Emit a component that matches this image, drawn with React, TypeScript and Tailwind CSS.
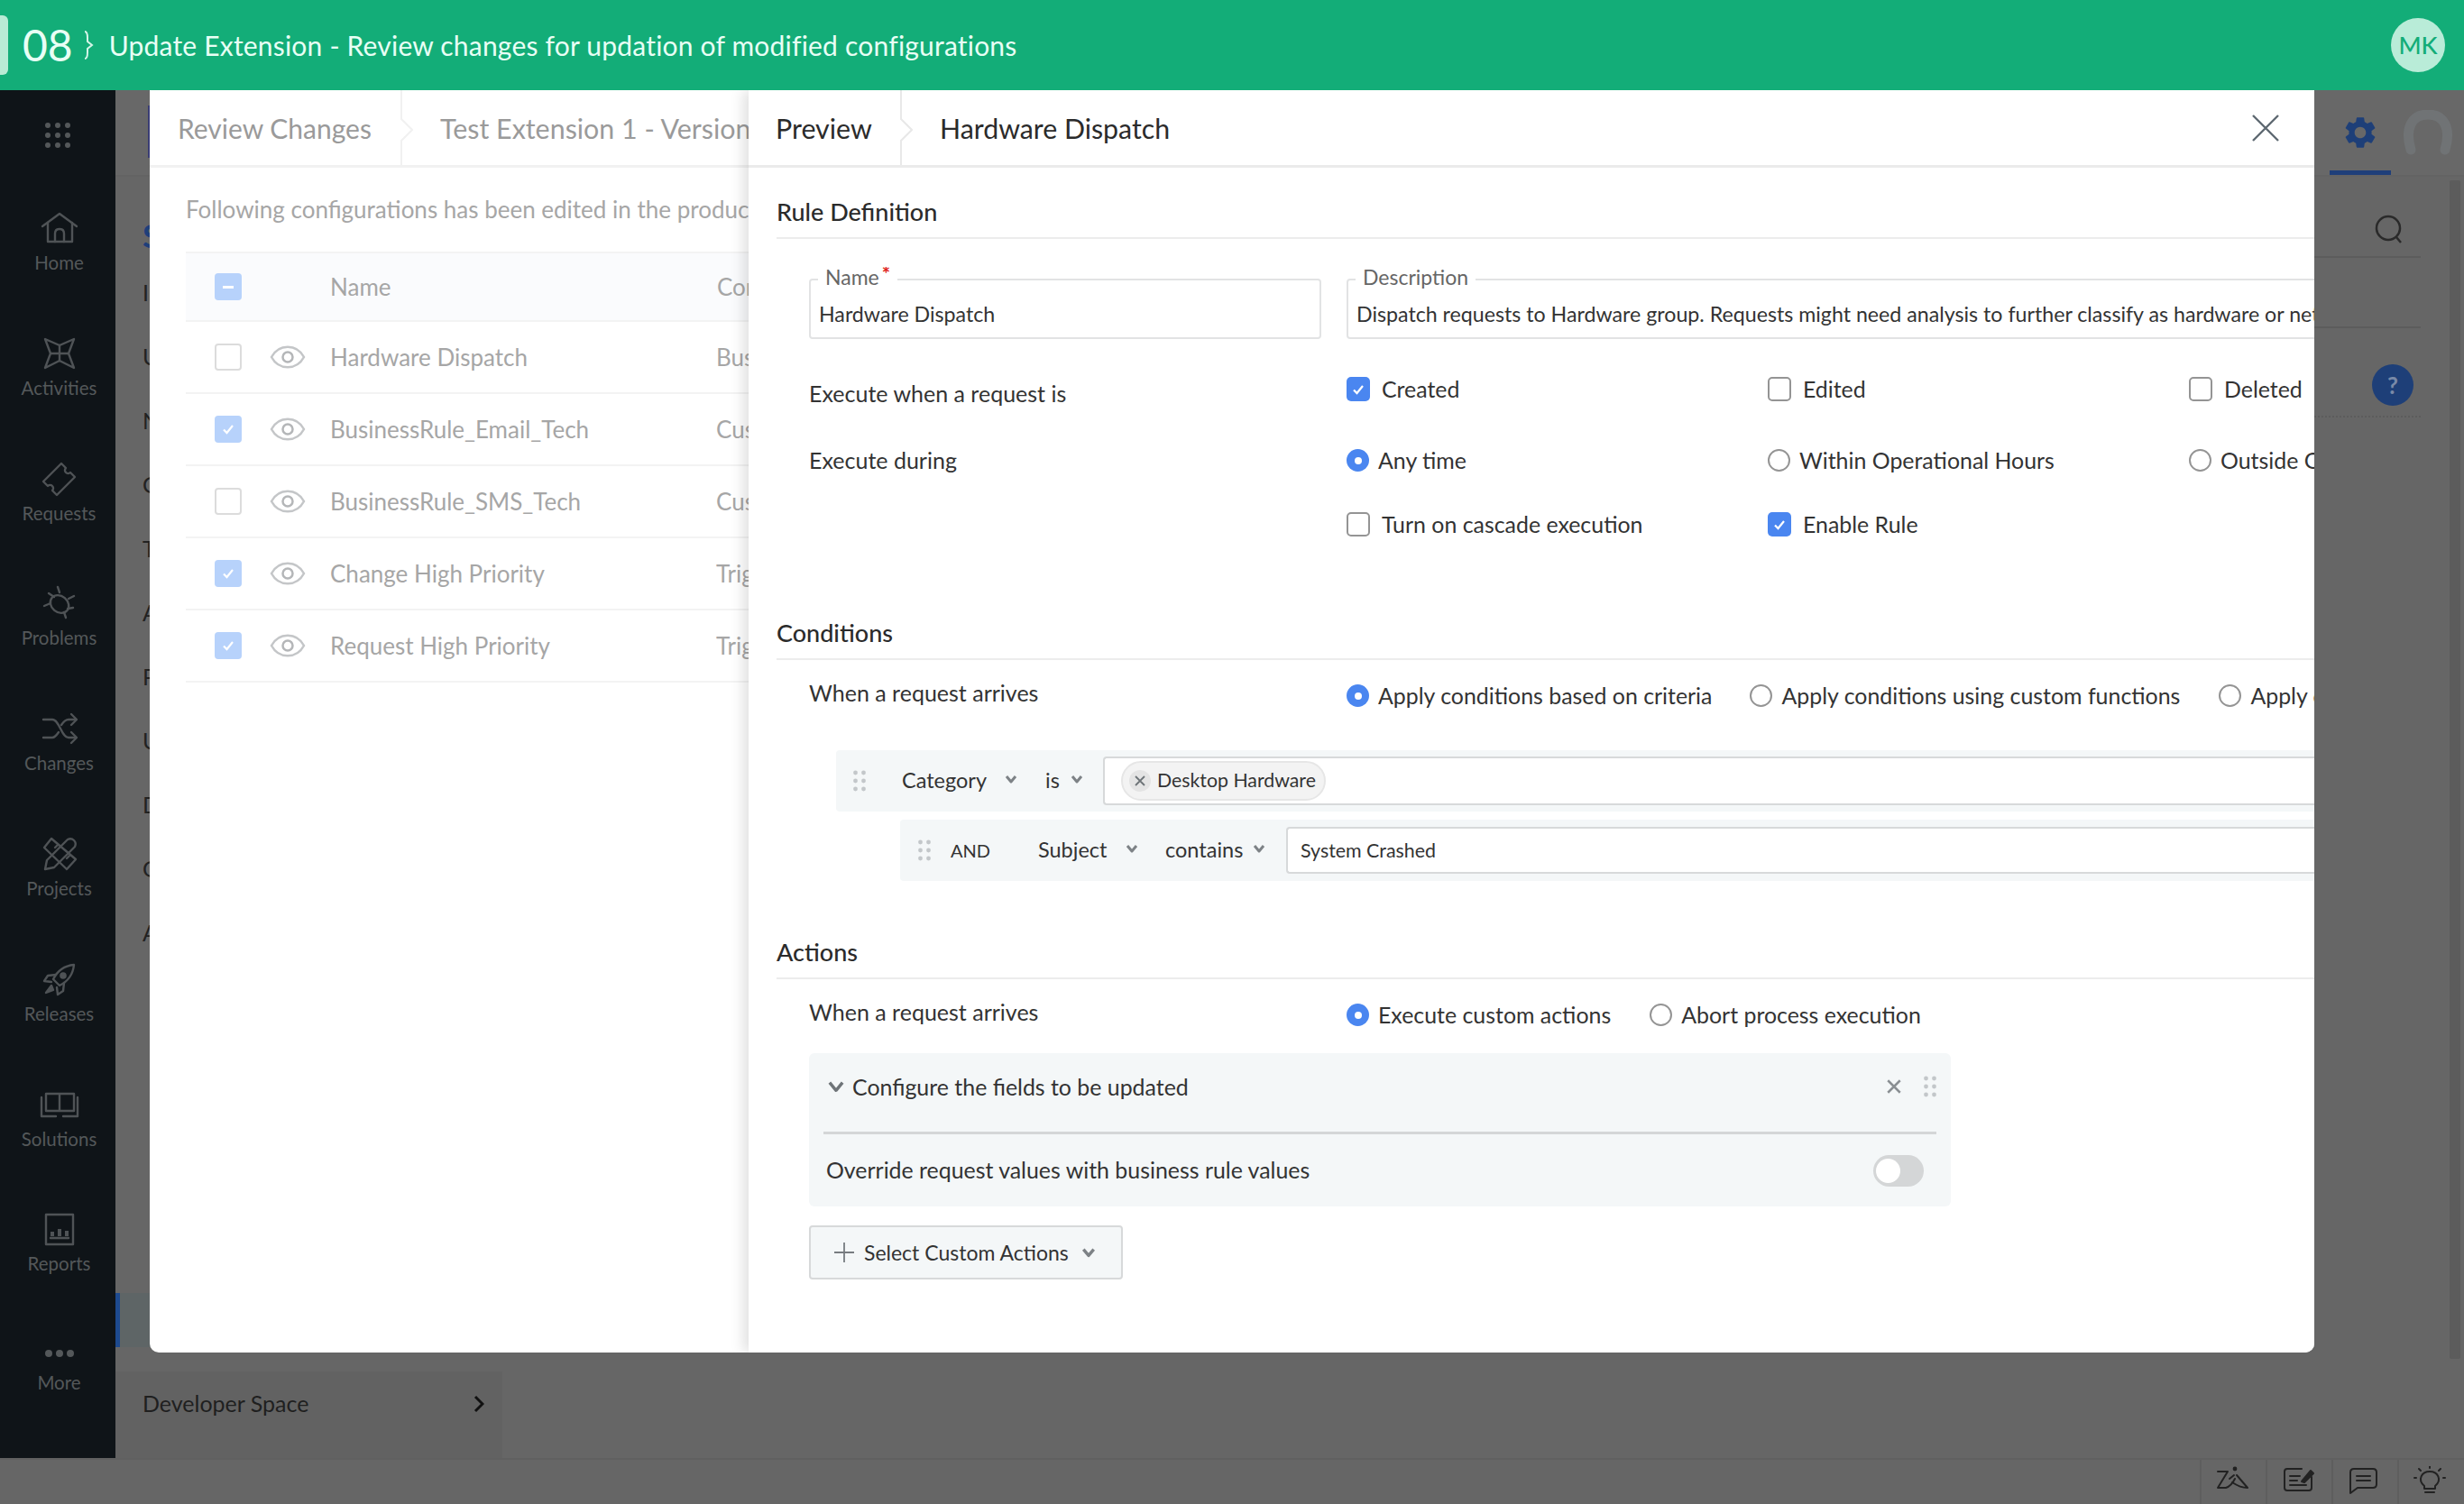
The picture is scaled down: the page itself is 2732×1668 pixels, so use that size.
import React from "react";
import { MdSettings } from "react-icons/md";

const s = { fill: "none", stroke: "#4f5356", strokeWidth: 2.4, strokeLinecap: "round" as const, strokeLinejoin: "round" as const };

const navIcons: Record<string, React.ReactNode> = {
  Home: <g {...s}><path d="M5 22 L24 8 L43 22" /><path d="M11 18 V39 H38 V18" /><path d="M19 39 V30 Q19 25 24 25 Q29 25 29 30 V39" /></g>,
  Activities: <g {...s}><path d="M8 8 L24 15 L40 8 L34 24 L40 40 L24 32 L8 40 L14 24 Z" /><path d="M24 15 V32 M14 24 H34" /></g>,
  Requests: <g {...s}><path d="M6 27 L26 7 L31 12 A3.5 3.5 0 0 0 36 17 L41 22 L21 42 L16 37 A3.5 3.5 0 0 0 11 32 Z" /></g>,
  Problems: <g {...s}><ellipse cx="24" cy="25" rx="11" ry="9" transform="rotate(40 24 25)" /><path d="M22 6 L24 12 M40 16 L34 19 M39 29 L33 30 M31 40 L29 34 M7 27 L14 24 M12 13 L18 17" /></g>,
  Changes: <g {...s}><path d="M6 14 H16 C24 14 26 34 34 34 H42 M6 34 H16 C19 34 21 31 23 28 M26 20 C28 17 30 14 34 14 H42" /><path d="M37 8 L43 14 L37 20 M37 28 L43 34 L37 40" /></g>,
  Projects: <g {...s}><path d="M15 7 L42 30 L32 41 L7 17 Z" /><path d="M8 41 L10 31 L33 8 Q37 6 40 9 Q43 12 41 16 L18 39 Z" /><path d="M19 17 L22 14 M32 29 L35 26" /></g>,
  Releases: <g {...s}><path d="M40 8 C30 9 22 14 17 24 L24 31 C34 26 39 18 40 8 Z" /><circle cx="28" cy="20" r="2.6" fill="#4f5356" /><path d="M20 19 L11 20 L7 26 L15 27 M29 28 L28 37 L22 41 L21 33" /><path d="M9 39 L15 31 L17 36 Z" fill="#4f5356" /></g>,
  Solutions: <g {...s}><path d="M9 12 H24 V31 H9 Z M24 12 H40 V31 H24 Z" /><path d="M4 16 V37 H20 M44 16 V37 H28" /></g>,
  Reports: <g {...s}><rect x="9" y="8" width="30" height="33" /><path d="M16 32 V27 M24 32 V24 M32 32 V26" strokeWidth="4" strokeLinecap="butt" /><path d="M14 34 H34" /></g>,
  More: <g fill="#54585a"><circle cx="12" cy="23" r="4" /><circle cx="24" cy="23" r="4" /><circle cx="36" cy="23" r="4" /></g>,
};

const navItems = ["Home", "Activities", "Requests", "Problems", "Changes", "Projects", "Releases", "Solutions", "Reports"];

function NavItem({ name, tight }: { name: string; tight?: boolean }) {
  return (
    <div className="flex h-[138.8px] shrink-0 flex-col items-center pt-[24px]">
      <svg width="48" height="48" viewBox="0 0 48 48" className="shrink-0">{navIcons[name]}</svg>
      <div className={`whitespace-nowrap text-[20.5px] leading-[22px] text-[#54585a] ${tight ? "mt-[-4px]" : "mt-[3px]"}`}>{name}</div>
    </div>
  );
}

function Chevron({ size = 14, color = "#7d8286", sw = 3 }: { size?: number; color?: string; sw?: number }) {
  return (
    <svg width={size} height={size} viewBox="0 0 14 14" className="shrink-0">
      <path d="M2 4 L7 10 L12 4" fill="none" stroke={color} strokeWidth={sw} strokeLinejoin="round" />
    </svg>
  );
}

function Check({ on, label }: { on?: boolean; label: string }) {
  return (
    <div className="flex items-center">
      {on ? (
        <div className="flex h-[27px] w-[26px] shrink-0 items-center justify-center rounded-[5px] bg-[#4a86f0]">
          <svg width="16" height="16" viewBox="0 0 16 16"><path d="M3 8.5 L6.5 12 L13 4" fill="none" stroke="#fff" strokeWidth="2.2" /></svg>
        </div>
      ) : (
        <div className="h-[27px] w-[26px] shrink-0 rounded-[5px] border-2 border-[#949494] bg-white" />
      )}
      <span className="ml-[13px] whitespace-nowrap text-[24.9px] text-[#333]">{label}</span>
    </div>
  );
}

function Radio({ on, label }: { on?: boolean; label: string }) {
  return (
    <div className="flex items-center">
      {on ? (
        <div className="flex h-[25px] w-[25px] shrink-0 items-center justify-center rounded-full bg-[#4a86f0]">
          <div className="h-[8px] w-[8px] rounded-full bg-white" />
        </div>
      ) : (
        <div className="h-[25px] w-[25px] shrink-0 rounded-full border-2 border-[#949494] bg-white" />
      )}
      <span className="ml-[10px] whitespace-nowrap text-[24.9px] text-[#333]">{label}</span>
    </div>
  );
}

function Section({ title, h }: { title: string; h: string }) {
  return (
    <div className={`flex shrink-0 items-end border-b-2 border-[#ececec] pb-[13px] ${h}`}>
      <div className="text-[27px] font-medium leading-[30px] text-[#2b2b2b]">{title}</div>
    </div>
  );
}

function Grip({ color = "#c3c7ca" }: { color?: string }) {
  return (
    <svg width="16" height="24" viewBox="0 0 16 24" className="shrink-0">
      {[3, 12, 21].map((y) => (
        <g key={y} fill={color}>
          <circle cx="3.5" cy={y} r="2.4" />
          <circle cx="12.5" cy={y} r="2.4" />
        </g>
      ))}
    </svg>
  );
}

function Field({ label, star, value, className }: { label: string; star?: boolean; value: string; className: string }) {
  return (
    <fieldset className={`h-[80px] shrink-0 rounded-[4px] border-2 border-[#e2e3e4] ${className}`}>
      <legend className="ml-[8px] px-[8px] text-[23px] leading-[28px] text-[#666]">
        <span className="relative top-[-3px]">
          {label}
          {star && <span className="relative top-[-4px] ml-[3px] text-[22px] font-bold leading-none text-[#e0241a]">*</span>}
        </span>
      </legend>
      <div className="overflow-hidden whitespace-nowrap pl-[9px] pt-[8px] text-[23.2px] leading-[32px] text-[#333]">{value}</div>
    </fieldset>
  );
}

const rows = [
  { on: false, name: "Hardware Dispatch", t: "Business Rules" },
  { on: true, name: "BusinessRule_Email_Tech", t: "Custom Actions" },
  { on: false, name: "BusinessRule_SMS_Tech", t: "Custom Actions" },
  { on: true, name: "Change High Priority", t: "Triggers" },
  { on: true, name: "Request High Priority", t: "Triggers" },
];

const setupList = ["Instance Configurations", "Users & Permissions", "Notifications", "Customization", "Templates & Forms", "Automation", "Portal Settings", "Utilities", "Data Administration", "General Settings", "Apps & Add-ons"];

const ink = { fill: "none", stroke: "#222", strokeWidth: 2, strokeLinecap: "round" as const, strokeLinejoin: "round" as const };

export default function App() {
  return (
    <div className="relative flex h-[1668px] w-[2732px] flex-col overflow-hidden bg-[#666666] font-['Lato',sans-serif]">
      {/* Top banner */}
      <header className="z-20 flex h-[100px] shrink-0 items-center bg-[#13ad78] pr-[21px]">
        <div className="h-[66px] w-[9px] rounded-r-[6px] bg-[#b8ebd5]" />
        <div className="ml-[16px] text-[48px] leading-none text-[#e8fff5]">08</div>
        <svg width="12" height="32" viewBox="0 0 12 32" className="ml-[11px]">
          <path d="M2 1 Q5 1 5 8 V12 L10 16 L5 20 V24 Q5 31 2 31" fill="none" stroke="#d5f5e8" strokeWidth="2" />
        </svg>
        <div className="ml-[17px] whitespace-nowrap text-[30px] tracking-[0.2px] text-[#e8fff5]">Update Extension - Review changes for updation of modified configurations</div>
        <div className="ml-auto flex h-[60px] w-[60px] items-center justify-center rounded-full bg-[#b9ecd8] text-[27px] font-medium text-[#13ad78]">MK</div>
      </header>

      <div className="flex min-h-0 flex-1">
        {/* Sidebar */}
        <aside className="flex w-[128px] shrink-0 flex-col items-stretch bg-[#0f1418] pl-[3px]">
          <div className="flex h-[105px] shrink-0 items-start justify-center pr-[3px] pt-[36px]">
            <svg width="28" height="28" viewBox="0 0 28 28" fill="#54585a">
              {[3, 14, 25].map((y) => [3, 14, 25].map((x) => <circle key={`${x}-${y}`} cx={x} cy={y} r="3" />))}
            </svg>
          </div>
          {navItems.map((n) => <NavItem key={n} name={n} />)}
          <NavItem name="More" tight />
        </aside>

        {/* Dimmed page */}
        <main className="flex min-w-0 flex-1 flex-col">
          <div className="flex h-[96px] shrink-0 items-stretch justify-between border-b-2 border-[#636363] bg-[#686868]">
            <div className="ml-[36px] mt-[17px] h-[58px] w-[3px] bg-[#3a3d74]" />
            <div className="flex">
              <div className="flex w-[68px] items-center justify-center border-b-[5px] border-[#1f3f7a] pt-[4px]">
                <MdSettings size={42} color="#1e3f78" />
              </div>
              <div className="flex w-[81px] items-center justify-center">
                <svg width="56" height="50" viewBox="0 0 56 50">
                  <path d="M9 44 C2 20 10 5 28 5 C46 5 54 20 47 44" fill="none" stroke="#707375" strokeWidth="11" strokeLinecap="round" />
                </svg>
              </div>
            </div>
          </div>
          <div className="flex min-h-0 flex-1">
            <nav className="flex w-[429px] shrink-0 flex-col">
              <div className="flex h-[93px] shrink-0 items-end pl-[30px] pb-[8px] text-[36px] font-bold leading-[40px] text-[#1f3f7a]">Setup</div>
              {setupList.map((t) => (
                <div key={t} className="flex h-[71px] shrink-0 items-center pl-[30px] text-[25px] text-[#222]">{t}</div>
              ))}
              <div className="flex-1" />
              <div className="h-[60px] shrink-0 border-l-[5px] border-[#1d4a8f] bg-[#5e6566]" />
              <div className="mt-[27px] flex h-[96px] shrink-0 items-center justify-between bg-[#626262] pb-[24px] pl-[30px] pr-[20px]">
                <span className="text-[25px] text-[#1f1f1f]">Developer Space</span>
                <svg width="12" height="20" viewBox="0 0 12 20"><path d="M2 2 L10 10 L2 18" fill="none" stroke="#111" strokeWidth="3" /></svg>
              </div>
            </nav>
            <div className="flex-1" />
            <div className="flex w-[166px] shrink-0">
              <div className="flex w-[118px] flex-col">
                <div className="flex h-[90px] shrink-0 items-center justify-end border-b-2 border-[#5c5c5c] pr-[17px] pt-[28px]">
                  <svg width="36" height="36" viewBox="0 0 36 36"><circle cx="17" cy="17" r="13" fill="none" stroke="#2a2a2a" strokeWidth="2.5" /><path d="M26 27 L31 33" stroke="#2a2a2a" strokeWidth="2.5" /></svg>
                </div>
                <div className="h-[78px] shrink-0 border-b-2 border-[#5c5c5c]" />
                <div className="flex h-[99px] shrink-0 items-start justify-end border-b-2 border-dotted border-[#5c5c5c] pr-[8px] pt-[40px]">
                  <div className="flex h-[46px] w-[46px] items-center justify-center rounded-full bg-[#1e3f78] text-[26px] font-bold text-[#7a8aa8]">?</div>
                </div>
              </div>
              <div className="ml-[32px] mt-[4px] h-[1307px] w-[12px] rounded-[2px] bg-[#5c5c5c]" />
            </div>
          </div>
        </main>
      </div>

      {/* Footer */}
      <footer className="flex h-[51px] shrink-0 justify-end border-t-2 border-[#606060] bg-[#666666] pr-[1px]">
        {[
          <g key="z" {...ink}><path d="M2 6 H13 L2 24 H11 Q17 22 21 14 M15 14 L20 10" /><path d="M23 10 L35 24 Q27 24 18 18" /><circle cx="21" cy="3" r="1.4" fill="#222" /></g>,
          <g key="e" {...ink}><path d="M22 3 H6 Q3 3 3 6 V24 Q3 27 6 27 H30 Q33 27 33 24 V12" /><path d="M9 11 H20 M9 16 H17 M9 21 H27" /><path d="M22 17 L32 5 L35 8 L25 18 Z" fill="#222" /></g>,
          <g key="c" {...ink}><path d="M7 3 H28 Q32 3 32 7 V20 Q32 24 28 24 H11 L3 30 V7 Q3 3 7 3 Z" /><path d="M10 11 H25 M10 16 H25" /></g>,
          <g key="b" {...ink}><path d="M12 22 C4 15 9 6 18 6 C27 6 32 15 24 22 V25 H12 Z M13 29 H23" /><path d="M18 0 V2 M6 3 L8 5 M30 3 L28 5 M1 13 H3 M33 13 H35" /></g>,
        ].map((g, i) => (
          <div key={i} className="flex w-[73px] items-start justify-center border-l-2 border-[#5e5e5e] pr-[3px] pt-[7px]">
            <svg width="36" height="32" viewBox="0 0 36 32">{g}</svg>
          </div>
        ))}
      </footer>

      {/* Modal */}
      <div className="absolute left-[166px] top-[100px] z-10 flex h-[1400px] w-[2400px] overflow-hidden rounded-b-[10px] bg-white">
        {/* Review panel */}
        <section className="flex w-[664px] shrink-0 flex-col overflow-hidden">
          <div className="flex h-[86px] shrink-0 items-center border-b-[3px] border-[#f1f1f1] pl-[31px]">
            <div className="flex h-full w-[247px] shrink-0 items-center pt-[2px] text-[30px] text-[#9a9a9a]">Review Changes</div>
            <svg width="14" height="83" viewBox="0 0 14 83" className="shrink-0">
              <path d="M1 0 V32 L13 44 L1 56 V83" fill="#fff" stroke="#f1f1f1" strokeWidth="2" />
            </svg>
            <span className="ml-[30px] whitespace-nowrap pt-[2px] text-[30.4px] text-[#9a9a9a]">Test Extension 1 - Version 1.0</span>
          </div>
          <div className="flex h-[93px] shrink-0 items-center whitespace-nowrap pl-[40px] text-[26px] text-[#a6a6a6]">Following configurations has been edited in the production</div>
          <div className="ml-[40px] flex h-[78px] shrink-0 items-center border-y-2 border-[#f3f3f3] bg-[#fafbfd] pl-[32px]">
            <div className="flex h-[30px] w-[30px] shrink-0 items-center justify-center rounded-[4px] bg-[#b7d2fb]">
              <div className="h-[3px] w-[12px] bg-white" />
            </div>
            <div className="ml-[98px] w-[429px] shrink-0 text-[26px] text-[#a6a6a6]">Name</div>
            <div className="whitespace-nowrap text-[26px] text-[#a6a6a6]">Configuration</div>
          </div>
          {rows.map((r) => (
            <div key={r.name} className="ml-[40px] flex h-[80px] shrink-0 items-center border-b-2 border-[#f3f3f3] pl-[32px]">
              {r.on ? (
                <div className="flex h-[30px] w-[30px] shrink-0 items-center justify-center rounded-[4px] bg-[#b7d2fb]">
                  <svg width="18" height="18" viewBox="0 0 18 18"><path d="M4 9.5 L7.5 13 L14 5" fill="none" stroke="#fff" strokeWidth="2.2" /></svg>
                </div>
              ) : (
                <div className="h-[30px] w-[30px] shrink-0 rounded-[4px] border-2 border-[#dcdcdc] bg-white" />
              )}
              <svg width="40" height="28" viewBox="0 0 40 28" className="ml-[31px] shrink-0">
                <path d="M2 14 C10 -1 30 -1 38 14 C30 29 10 29 2 14 Z" fill="none" stroke="#c4c6c8" strokeWidth="2.5" />
                <circle cx="20" cy="14" r="5.5" fill="none" stroke="#b4b6b8" strokeWidth="2.5" />
              </svg>
              <div className="ml-[27px] w-[428px] shrink-0 whitespace-nowrap text-[26px] text-[#a6a6a6]">{r.name}</div>
              <div className="whitespace-nowrap text-[26px] text-[#a6a6a6]">{r.t}</div>
            </div>
          ))}
        </section>

        {/* Preview panel */}
        <section className="z-10 flex min-w-0 flex-1 flex-col overflow-hidden bg-white shadow-[-6px_0_14px_rgba(0,0,0,0.12)]">
          <div className="flex h-[86px] shrink-0 items-center border-b-[3px] border-[#ebebeb]">
            <div className="flex h-full w-[168px] shrink-0 items-center pl-[30px] pt-[2px] text-[30.4px] text-[#2b2b2b]">Preview</div>
            <svg width="14" height="83" viewBox="0 0 14 83" className="shrink-0">
              <path d="M1 0 V32 L13 44 L1 56 V83" fill="#fff" stroke="#e8e8e8" strokeWidth="2" />
            </svg>
            <span className="ml-[30px] whitespace-nowrap pt-[2px] text-[30.3px] text-[#2b2b2b]">Hardware Dispatch</span>
            <svg width="32" height="32" viewBox="0 0 32 32" className="ml-auto mr-[38px] shrink-0">
              <path d="M2 2 L30 30 M30 2 L2 30" stroke="#5d6870" strokeWidth="2.4" />
            </svg>
          </div>

          <div className="flex min-w-0 flex-col pl-[31px]">
            <Section title="Rule Definition" h="h-[79px]" />

            <div className="ml-[36px] mt-[31px] flex h-[80px] shrink-0 overflow-hidden">
              <Field label="Name" star value="Hardware Dispatch" className="w-[568px]" />
              <Field label="Description" value="Dispatch requests to Hardware group. Requests might need analysis to further classify as hardware or network issue and assign" className="ml-[28px] w-[1100px]" />
            </div>

            <div className="ml-[36px] mt-[36px] flex h-[40px] shrink-0 items-center">
              <div className="w-[596px] shrink-0 pt-[10px] text-[25px] text-[#333]">Execute when a request is</div>
              <div className="w-[467px] shrink-0"><Check on label="Created" /></div>
              <div className="w-[467px] shrink-0"><Check label="Edited" /></div>
              <div className="shrink-0"><Check label="Deleted" /></div>
            </div>
            <div className="ml-[36px] mt-[39px] flex h-[40px] shrink-0 items-center">
              <div className="w-[596px] shrink-0 text-[25px] text-[#333]">Execute during</div>
              <div className="w-[467px] shrink-0"><Radio on label="Any time" /></div>
              <div className="w-[467px] shrink-0"><Radio label="Within Operational Hours" /></div>
              <div className="shrink-0"><Radio label="Outside Operational Hours" /></div>
            </div>
            <div className="ml-[36px] mt-[31px] flex h-[40px] shrink-0 items-center">
              <div className="w-[596px] shrink-0" />
              <div className="w-[467px] shrink-0"><Check label="Turn on cascade execution" /></div>
              <div className="w-[467px] shrink-0"><Check on label="Enable Rule" /></div>
            </div>

            <Section title="Conditions" h="h-[130px]" />

            <div className="ml-[36px] mt-[20px] flex h-[40px] shrink-0 items-center">
              <div className="w-[596px] shrink-0 pb-[6px] text-[25px] text-[#333]">When a request arrives</div>
              <Radio on label="Apply conditions based on criteria" />
              <div className="ml-[42px]"><Radio label="Apply conditions using custom functions" /></div>
              <div className="ml-[43px]"><Radio label="Apply conditions using scripts" /></div>
            </div>

            <div className="ml-[66px] mt-[40px] flex h-[68px] shrink-0 items-center rounded-l-[4px] bg-[#f4f7f8] pl-[18px]">
              <Grip />
              <span className="ml-[39px] w-[114px] shrink-0 text-[23.5px] text-[#333]">Category</span>
              <span className="mb-[4px]"><Chevron /></span>
              <span className="ml-[31px] w-[28px] shrink-0 text-[23.5px] text-[#333]">is</span>
              <span className="mb-[4px]"><Chevron /></span>
              <div className="ml-[22px] flex h-[54px] flex-1 items-center rounded-l-[4px] border-2 border-r-0 border-[#d7d9da] bg-white pl-[18px]">
                <div className="flex h-[44px] w-[227px] shrink-0 items-center rounded-full border-2 border-[#e6e6e6] bg-[#f3f3f3] pl-[7px]">
                  <div className="flex h-[24px] w-[24px] shrink-0 items-center justify-center rounded-full bg-[#e4e4e4]">
                    <svg width="14" height="14" viewBox="0 0 14 14"><path d="M2 2 L12 12 M12 2 L2 12" stroke="#6e7478" strokeWidth="1.8" /></svg>
                  </div>
                  <span className="ml-[7px] whitespace-nowrap text-[21.3px] text-[#333]">Desktop Hardware</span>
                </div>
              </div>
            </div>

            <div className="ml-[137px] mt-[9px] flex h-[68px] shrink-0 items-center rounded-l-[4px] bg-[#f4f7f8] pl-[19px]">
              <Grip />
              <span className="ml-[21px] w-[97px] shrink-0 text-[20px] text-[#333]">AND</span>
              <span className="w-[97px] shrink-0 text-[23.5px] text-[#333]">Subject</span>
              <span className="mb-[4px]"><Chevron /></span>
              <span className="ml-[30px] w-[97px] shrink-0 text-[23.5px] text-[#333]">contains</span>
              <span className="mb-[4px]"><Chevron /></span>
              <div className="ml-[23px] flex h-[52px] flex-1 items-center rounded-l-[4px] border-2 border-r-0 border-[#d7d9da] bg-white pl-[14px] text-[21.4px] text-[#333]">System Crashed</div>
            </div>

            <Section title="Actions" h="h-[109px]" />

            <div className="ml-[36px] mt-[20px] flex h-[40px] shrink-0 items-center">
              <div className="w-[596px] shrink-0 pb-[6px] text-[25px] text-[#333]">When a request arrives</div>
              <Radio on label="Execute custom actions" />
              <div className="ml-[43px]"><Radio label="Abort process execution" /></div>
            </div>

            <div className="ml-[36px] mt-[22px] flex h-[170px] w-[1266px] shrink-0 flex-col rounded-[6px] bg-[#f4f7f8]">
              <div className="mx-[16px] flex h-[90px] shrink-0 items-start border-b-[3px] border-[#d4d6d7] pt-[20px]">
                <div className="flex h-[34px] items-center pl-[4px]"><Chevron size={20} color="#6e7478" sw={2.4} /></div>
                <span className="ml-[8px] text-[24.9px] leading-[34px] text-[#333]">Configure the fields to be updated</span>
                <svg width="18" height="18" viewBox="0 0 16 16" className="ml-auto mr-[23px] mt-[8px]"><path d="M2 2 L14 14 M14 2 L2 14" stroke="#8a8f93" strokeWidth="2.2" /></svg>
                <div className="mr-[-1px] mt-[5px]"><Grip /></div>
              </div>
              <div className="flex flex-1 items-center pl-[19px] pr-[30px]">
                <span className="text-[24.9px] text-[#333]">Override request values with business rule values</span>
                <div className="ml-auto flex h-[35px] w-[56px] shrink-0 items-center rounded-full bg-[#d4d6d7] pl-[3px]">
                  <div className="h-[27px] w-[27px] rounded-full bg-white" />
                </div>
              </div>
            </div>

            <button className="ml-[36px] mt-[21px] flex h-[60px] w-[348px] shrink-0 items-center rounded-[4px] border-2 border-[#d7d9da] bg-[#f4f7f8] pl-[25px] text-[23px] text-[#333]">
              <svg width="24" height="24" viewBox="0 0 24 24" className="shrink-0"><path d="M12 1 V23 M1 12 H23" stroke="#777c80" strokeWidth="1.8" /></svg>
              <span className="ml-[10px] whitespace-nowrap">Select Custom Actions</span>
              <span className="ml-[14px] flex"><Chevron size={16} /></span>
            </button>
          </div>
        </section>
      </div>
    </div>
  );
}
